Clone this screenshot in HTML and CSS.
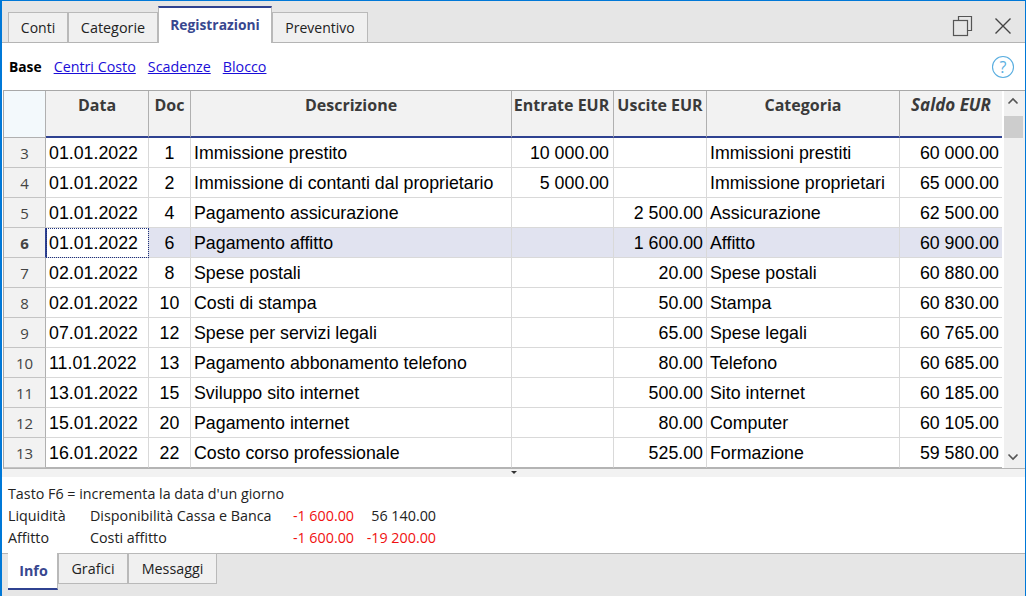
FILE: index.html
```html
<!DOCTYPE html>
<html lang="it">
<head>
<meta charset="utf-8">
<title>Registrazioni</title>
<link rel="stylesheet" href="styles.css">
</head>
<body>
<div class="window">
  <div class="topbar">
    <div class="tabs">
      <div class="tab tab-conti">Conti</div>
      <div class="tab tab-cat">Categorie</div>
      <div class="tab tab-active tab-reg">Registrazioni</div>
      <div class="tab tab-prev">Preventivo</div>
    </div>
    <div class="winctl">
      <svg class="ic-restore" width="22" height="22" viewBox="0 0 22 22" fill="none" stroke="#555" stroke-width="1.2"><path d="M6.500 5.500V1.500H19.500V15.500H15.500"/><rect x="1.500" y="5.500" width="14" height="15"/></svg>
      <svg class="ic-close" width="16" height="16" viewBox="0 0 16 16" fill="none" stroke="#444" stroke-width="1.4"><path d="M0.500 0.500L15.500 15.500M15.500 0.500L0.500 15.500"/></svg>
    </div>
  </div>
  <div class="viewbar">
    <b class="view-base">Base</b>
    <a class="view-link">Centri Costo</a>
    <a class="view-link">Scadenze</a>
    <a class="view-link">Blocco</a>
    <svg class="ic-help" width="24" height="24" viewBox="0 0 24 24" fill="none"><circle cx="12" cy="12" r="10.500" stroke="#5aaee0" stroke-width="1.1"/><text x="12" y="18" text-anchor="middle" class="help-q">?</text></svg>
  </div>
  <div class="gridwrap">
    <table class="grid">
      <colgroup>
        <col class="c-row"><col class="c-data"><col class="c-doc"><col class="c-desc"><col class="c-ent"><col class="c-usc"><col class="c-cat"><col class="c-sal">
      </colgroup>
      <thead>
        <tr>
          <th class="corner"></th><th>Data</th><th>Doc</th><th>Descrizione</th><th class="h-ent">Entrate EUR</th><th>Uscite EUR</th><th>Categoria</th><th class="ital">Saldo EUR</th>
        </tr>
      </thead>
      <tbody>
        <tr><th class="rn">3</th><td>01.01.2022</td><td class="ctr">1</td><td>Immissione prestito</td><td class="num ent">10 000.00</td><td class="num"></td><td>Immissioni prestiti</td><td class="num">60 000.00</td></tr>
        <tr><th class="rn">4</th><td>01.01.2022</td><td class="ctr">2</td><td>Immissione di contanti dal proprietario</td><td class="num ent">5 000.00</td><td class="num"></td><td>Immissione proprietari</td><td class="num">65 000.00</td></tr>
        <tr><th class="rn">5</th><td>01.01.2022</td><td class="ctr">4</td><td>Pagamento assicurazione</td><td class="num ent"></td><td class="num">2 500.00</td><td>Assicurazione</td><td class="num">62 500.00</td></tr>
        <tr class="sel"><th class="rn">6</th><td class="cur">01.01.2022</td><td class="ctr">6</td><td>Pagamento affitto</td><td class="num ent"></td><td class="num">1 600.00</td><td>Affitto</td><td class="num">60 900.00</td></tr>
        <tr><th class="rn">7</th><td>02.01.2022</td><td class="ctr">8</td><td>Spese postali</td><td class="num ent"></td><td class="num">20.00</td><td>Spese postali</td><td class="num">60 880.00</td></tr>
        <tr><th class="rn">8</th><td>02.01.2022</td><td class="ctr">10</td><td>Costi di stampa</td><td class="num ent"></td><td class="num">50.00</td><td>Stampa</td><td class="num">60 830.00</td></tr>
        <tr><th class="rn">9</th><td>07.01.2022</td><td class="ctr">12</td><td>Spese per servizi legali</td><td class="num ent"></td><td class="num">65.00</td><td>Spese legali</td><td class="num">60 765.00</td></tr>
        <tr><th class="rn">10</th><td>11.01.2022</td><td class="ctr">13</td><td>Pagamento abbonamento telefono</td><td class="num ent"></td><td class="num">80.00</td><td>Telefono</td><td class="num">60 685.00</td></tr>
        <tr><th class="rn">11</th><td>13.01.2022</td><td class="ctr">15</td><td>Sviluppo sito internet</td><td class="num ent"></td><td class="num">500.00</td><td>Sito internet</td><td class="num">60 185.00</td></tr>
        <tr><th class="rn">12</th><td>15.01.2022</td><td class="ctr">20</td><td>Pagamento internet</td><td class="num ent"></td><td class="num">80.00</td><td>Computer</td><td class="num">60 105.00</td></tr>
        <tr class="last"><th class="rn">13</th><td>16.01.2022</td><td class="ctr">22</td><td>Costo corso professionale</td><td class="num ent"></td><td class="num">525.00</td><td>Formazione</td><td class="num">59 580.00</td></tr>
      </tbody>
    </table>
    <div class="scrollbar">
      <svg class="sb-up" width="12" height="8" viewBox="0 0 12 8" fill="none" stroke="#555" stroke-width="1.6"><path d="M1.500 6.500L6 2L10.500 6.500"/></svg>
      <div class="sb-thumb"></div>
      <svg class="sb-down" width="12" height="8" viewBox="0 0 12 8" fill="none" stroke="#555" stroke-width="1.6"><path d="M1.500 1.500L6 6L10.500 1.500"/></svg>
    </div>
  </div>
  <div class="splitter"><span class="split-mark"></span></div>
  <div class="info">
    <div class="info-line">Tasto F6 = incrementa la data d'un giorno</div>
    <div class="info-row"><span class="i-a">Liquidità</span><span class="i-b">Disponibilità Cassa e Banca</span><span class="i-c red">-1 600.00</span><span class="i-d">56 140.00</span></div>
    <div class="info-row"><span class="i-a">Affitto</span><span class="i-b">Costi affitto</span><span class="i-c red">-1 600.00</span><span class="i-d red">-19 200.00</span></div>
  </div>
  <div class="bottombar">
    <div class="btab btab-active">Info</div>
    <div class="btab btab-graf">Grafici</div>
    <div class="btab btab-mess">Messaggi</div>
  </div>
</div>
</body>
</html>
```
FILE: styles.css
```css
* { box-sizing: border-box; }
html, body { margin: 0; padding: 0; height: 100%; overflow: hidden; background: #fff; }
.window {
  width: 1026px; height: 596px;
  display: flex; flex-direction: column;
  border: 1px solid #0078d7; border-bottom: 0;
  border-left-width: 2px;
  font-family: "Open Sans", "Noto Sans", sans-serif;
  color: #222;
}
.topbar {
  height: 42px; flex: none;
  background: #e6e6e6;
  border-bottom: 1px solid #b4b4b4;
  display: flex; justify-content: space-between;
  position: relative;
}
.tabs { display: flex; align-items: flex-end; padding-left: 6px; margin-bottom: -1px; }
.tab {
  height: 31px;
  background: #f0f0f0;
  border: 1px solid #b9b9b9;
  border-bottom: 1px solid #b4b4b4;
  font-size: 14px; line-height: 29px; text-align: center;
}
.tab-conti { width: 60px; }
.tab-cat { width: 90px; font-size: 14.4px; }
.tab-reg { width: 114px; }
.tab-prev { width: 96px; }
.tab-active {
  height: 37px;
  background: #fff;
  border: 0;
  border-top: 2px solid #2f4291;
  border-left: 1px solid #b9b9b9;
  border-right: 1px solid #b9b9b9;
  color: #38478f; font-weight: 700; font-size: 13.8px; line-height: 33px;
}
.winctl { display: flex; align-items: center; gap: 21px; padding: 8px 14px 0 0; }
.viewbar {
  height: 47px; flex: none;
  display: flex; align-items: center;
  padding: 0 0 0 7px;
  font-size: 14.3px;
  background: #fff;
  position: relative;
}
.view-base { font-weight: 700; color: #000; font-size: 13.8px; margin-right: 12px; }
.view-link { color: #1a0dd8; text-decoration: underline; margin-right: 12px; }
.ic-help { margin-left: auto; margin-right: 10px; }
.help-q { font-size: 16px; fill: #5aaee0; font-family: "Open Sans", sans-serif; }
.gridwrap {
  height: 379px; flex: none;
  margin-left: 1px;
  display: flex;
  border-top: 1px solid #a8a8a8;
  border-left: 1px solid #a8a8a8;
  border-bottom: 1px solid #b4b4b4;
  background: #fff;
}
.grid {
  table-layout: fixed; border-collapse: separate; border-spacing: 0;
  width: 998px; height: 377px;
  font-family: "Liberation Sans", Arial, sans-serif;
  font-size: 17.8px; color: #000;
}
.c-row { width: 42px; }
.c-data { width: 103px; }
.c-doc { width: 42px; }
.c-desc { width: 321px; }
.c-ent { width: 102px; }
.c-usc { width: 93px; }
.c-cat { width: 193px; }
.c-sal { width: 102px; }
thead th {
  height: 47px; padding: 0; vertical-align: top;
  background: #f2f2f2;
  border-right: 1px solid #b0b0b0;
  border-bottom: 2px solid #2f4291;
  font-family: "Open Sans", "Noto Sans", sans-serif;
  font-size: 16px; font-weight: 700; color: #3a3a3a;
  text-align: center; white-space: nowrap; overflow: hidden;
  line-height: 28px;
}
thead th.corner { background: #f3f9fc; border-bottom: 1px solid #b0b0b0; }
thead th.h-ent { padding-right: 2px; }
thead th.ital { font-style: italic; border-right: 0; font-size: 17px; }
tbody td, tbody th { height: 30px; border-bottom: 1px solid #d9d9d9; padding: 2px 3px 0 3px; white-space: nowrap; overflow: hidden; }
tbody td { border-right: 1px solid #d9d9d9; }
tbody td:last-child { border-right: 0; }
tr.last td { border-bottom-color: #b4b4b4; }
tbody th.rn {
  background: #f2f2f2;
  border-right: 1px solid #b0b0b0;
  border-bottom: 1px solid #c4c4c4;
  font-family: "Open Sans", "Noto Sans", sans-serif;
  font-weight: 400; font-size: 15px; color: #444; text-align: center; padding: 0;
}
td.ctr { text-align: center; padding-left: 0; padding-right: 0; }
td.num { text-align: right; padding-right: 3px; }
td.ent { padding-right: 4px; }
tr.sel td { background: #e1e3f0; }
tr.sel th.rn { font-weight: 700; background: #f2f2f2; border-right-color: #2f4291; }
tr.sel td.cur { background: #fff; outline: 1px dotted #1c2f80; outline-offset: -1px; border-left: 1px solid #2f4291; padding-left: 2px; }
.scrollbar {
  flex: 1; position: relative;
  background: #f0f0f0;
  border-left: 2px solid #fff;
  display: flex; flex-direction: column; align-items: flex-start;
}
.sb-up { margin: 6px 0 0 3px; flex: none; }
.sb-thumb { width: 19px; height: 22px; background: #cdcdcd; margin-top: 11px; flex: none; }
.sb-down { margin: auto 0 7px 3px; flex: none; }
.splitter { height: 8px; flex: none; background: #f2f2f2; position: relative; display: flex; justify-content: center; }
.split-mark { width: 0; height: 0; margin-top: 2px; border: 3px solid transparent; border-top-color: #333; border-bottom: 0; }
.info { height: 76px; flex: none; padding: 6px 0 0 6px; background: #fff; font-size: 14.3px; }
.info-line, .info-row { height: 22px; line-height: 22px; white-space: nowrap; color: #222; }
.info-row { display: flex; }
.i-a { width: 82px; }
.i-b { width: 192px; }
.i-c { width: 72px; text-align: right; }
.i-d { width: 82px; text-align: right; }
.red { color: #f01010; }
.bottombar {
  flex: 1; min-height: 0;
  background: #e6e6e6;
  border-top: 1px solid #b4b4b4;
  display: flex; align-items: flex-start;
  padding-left: 6px;
}
.btab {
  height: 31px; margin-top: -1px;
  background: #f0f0f0;
  border: 1px solid #b9b9b9;
  font-size: 14.3px; line-height: 29px; text-align: center;
}
.btab-graf { width: 70px; }
.btab-mess { width: 89px; }
.btab-active {
  width: 50px; height: 37px;
  background: #fff; border: 0; border-right: 1px solid #b9b9b9;
  border-bottom: 2px solid #2f4291;
  color: #38478f; font-weight: 700; line-height: 35px; padding-left: 2px;
}
```
